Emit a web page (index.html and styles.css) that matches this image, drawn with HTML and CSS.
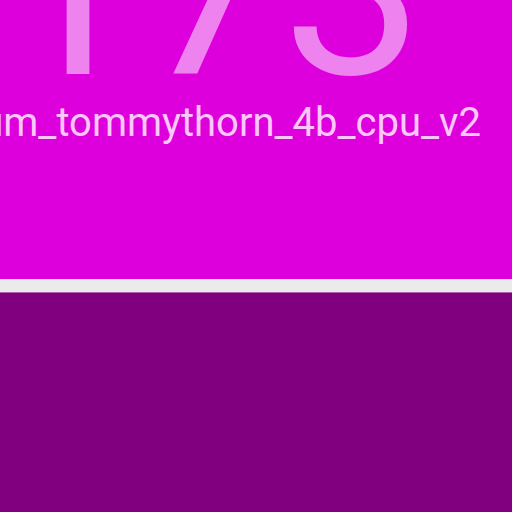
FILE: index.html
```html
<!DOCTYPE html>
<html>
<head>
<meta charset="utf-8">
<link rel="stylesheet" href="styles.css">
</head>
<body>
<div class="tile">
  <div class="count">173</div>
  <div class="name">tt_um_tommythorn_4b_cpu_v2</div>
</div>
<div class="gap"></div>
<div class="tile dark"></div>
</body>
</html>
```
FILE: styles.css
```css
html, body {
  margin: 0;
  padding: 0;
  width: 512px;
  height: 512px;
  overflow: hidden;
  background: #800080;
  font-family: Roboto, "Noto Sans", sans-serif;
}
.tile {
  height: 279px;
  background: #dd00dd;
  display: flex;
  flex-direction: column;
  align-items: center;
  overflow: hidden;
}
.count {
  align-self: flex-start;
  color: #ee82ee;
  font-size: 251px;
  line-height: 1;
  margin-top: -137px;
  margin-left: 0;
  white-space: nowrap;
}
.name {
  color: #fcc8fc;
  font-size: 40px;
  line-height: 1;
  white-space: nowrap;
  margin-left: -94px;
  margin-top: -11px;
}
.gap {
  height: 13px;
  background: #ebebeb;
}
.tile.dark {
  height: auto;
  flex: 1;
  background: #800080;
  border-top: 1px solid #b060b0;
}
```
